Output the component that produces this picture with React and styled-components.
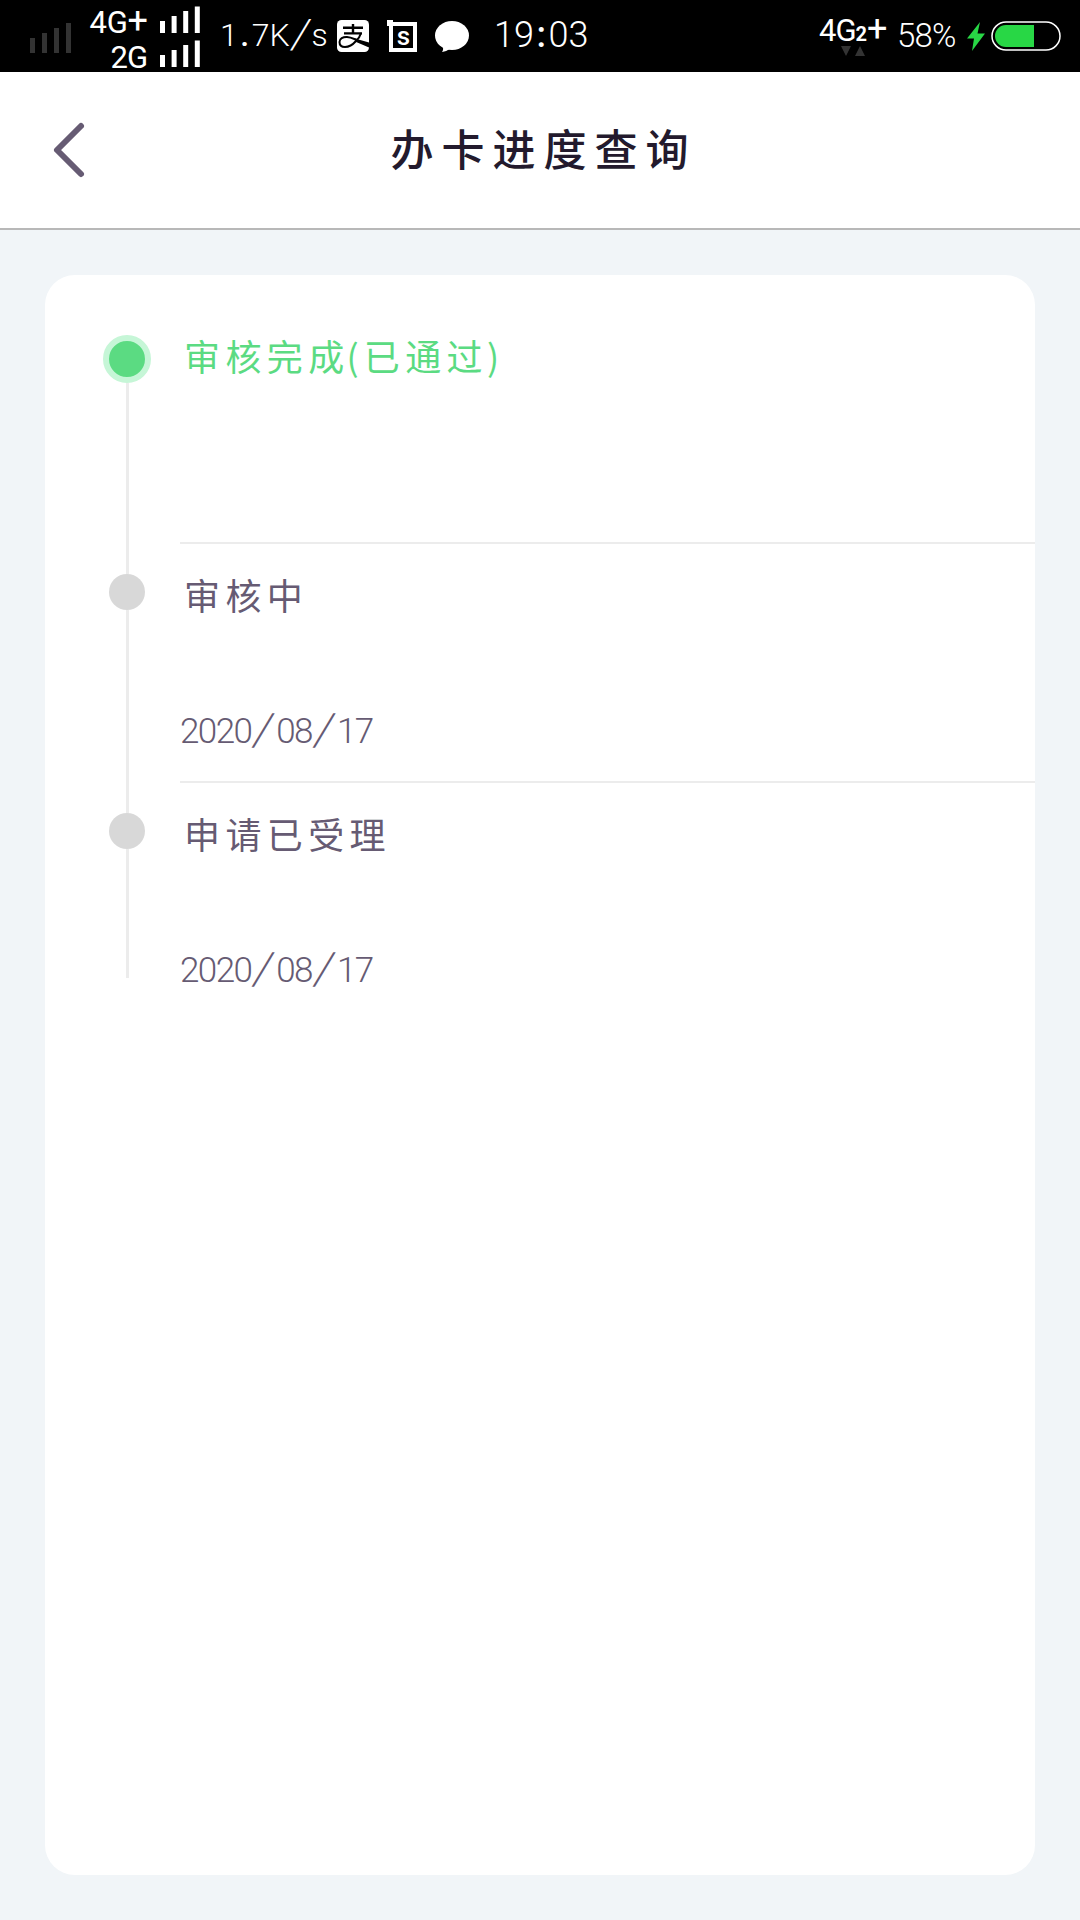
import React from 'react';
import styled, { createGlobalStyle } from 'styled-components';

const colors = {
  bg: '#f1f5f8',
  card: '#ffffff',
  heading: '#231a2d',
  text: '#665b73',
  done: '#5bdb82',
  halo: '#c6f6d7',
  dot: '#d8d8d8',
  line: '#ececec',
  battery: '#28d745',
  dim: '#333333',
};

const GlobalStyle = createGlobalStyle`
  * {
    box-sizing: border-box;
  }

  body {
    background: ${colors.bg};
    font-family: Roboto, 'Noto Sans CJK SC', sans-serif;
    margin: 0;
  }
`;

const Screen = styled.div`
  display: flex;
  flex-direction: column;
  height: 1920px;
  overflow: hidden;
  width: 1080px;
`;

const StatusBar = styled.div`
  background: #000;
  color: #fff;
  display: flex;
  height: 72px;
  justify-content: space-between;
  padding: 0 19px 0 30px;
`;

const Group = styled.div`
  align-items: flex-start;
  display: flex;
`;

const Icon = styled.svg`
  display: block;
  flex: none;
  margin-left: ${x => x.$left || 0}px;
  margin-top: ${x => x.$top || 0}px;
`;

const Networks = styled.div`
  display: flex;
  flex-direction: column;
  margin-left: 15px;
  padding-top: 5px;
  width: 115px;
`;

const Network = styled.div`
  align-items: flex-start;
  display: flex;
  height: 35px;
  justify-content: flex-end;
`;

const NetworkName = styled.span`
  font-size: 31px;
  font-weight: 400;
  height: 35px;
  letter-spacing: ${x => x.$tracking || -1}px;
  line-height: 36px;
  white-space: nowrap;
`;

const Plus = styled.span`
  font-size: 36px;
  letter-spacing: -1px;
  line-height: 0;
`;

const Reading = styled.span`
  flex: none;
  font-size: ${x => x.$size}px;
  font-weight: 300;
  letter-spacing: ${x => x.$tracking || 0}px;
  line-height: 40px;
  margin-left: ${x => x.$left}px;
  margin-top: ${x => x.$top}px;
  white-space: nowrap;
  width: ${x => x.$width}px;
`;

const Slash = styled.span`
  display: inline-block;
  font-size: 1.28em;
  letter-spacing: 0;
  line-height: 0.8;
  text-align: center;
  transform: skewX(-12deg);
  vertical-align: -2px;
  width: ${x => x.$width}px;
`;

const Mark = styled.span`
  font-weight: 500;
  padding: 0 ${x => x.$pad}px;
`;

const Mobile = styled.div`
  display: flex;
  flex-direction: column;
  padding-top: 13px;
  width: 78px;
`;

const Small = styled.span`
  font-size: 20px;
  font-weight: 700;
  letter-spacing: 0;
`;

const Header = styled.header`
  align-items: center;
  background: #fff;
  border-bottom: 2px solid #b8b8b8;
  display: grid;
  grid-template-columns: 120px 1fr 120px;
  height: 158px;
`;

const Back = styled.button`
  background: none;
  border: 0;
  height: 60px;
  padding: 0 0 0 51px;
`;

const Title = styled.h1`
  color: ${colors.heading};
  font-family: 'Noto Sans CJK SC', sans-serif;
  font-size: 43px;
  font-weight: 500;
  letter-spacing: 8px;
  line-height: 60px;
  margin: 0 0 7px;
  padding-left: 7px;
  text-align: center;
`;

const Card = styled.main`
  background: ${colors.card};
  border-radius: 30px;
  height: 1600px;
  margin: 45px;
  padding-top: 30px;
`;

const Step = styled.section`
  display: grid;
  grid-template-columns: 135px 1fr;
  height: 239px;
`;

const Rail = styled.div`
  align-items: center;
  display: flex;
  flex-direction: column;
  height: ${x => (x.$last ? 195 : 239)}px;
  padding-left: 29px;
`;

const Line = styled.div`
  background: ${x => (x.$hidden ? 'transparent' : colors.line)};
  flex: ${x => (x.$height ? `0 0 ${x.$height}px` : 1)};
  margin-left: 1px;
  width: 3px;
`;

const Dot = styled.div`
  background: ${x => (x.$active ? colors.done : colors.dot)};
  border: ${x => (x.$active ? `6px solid ${colors.halo}` : 0)};
  border-radius: 50%;
  flex: none;
  height: ${x => (x.$active ? 48 : 36)}px;
  width: ${x => (x.$active ? 48 : 36)}px;
`;

const Content = styled.div`
  border-bottom: ${x => (x.$last ? 0 : `2px solid ${colors.line}`)};
  color: ${x => (x.$active ? colors.done : colors.text)};
  padding-top: 25px;
`;

const Label = styled.div`
  font-family: 'Noto Sans CJK SC', sans-serif;
  font-size: 36px;
  font-weight: 400;
  height: 50px;
  letter-spacing: 5.4px;
  line-height: 50px;
  padding-left: 4px;
`;

const Paren = styled.span`
  letter-spacing: 2px;
  margin-left: ${x => (x.$open ? -3 : -1)}px;
  margin-right: ${x => (x.$open ? 3 : 0)}px;
`;

const DateText = styled.div`
  font-size: 35px;
  font-weight: 300;
  letter-spacing: -1.6px;
  line-height: 44px;
  margin-top: 91px;
`;

const steps = [
  {
    key: 'passed',
    label: (
      <>
        审核完成<Paren $open>(</Paren>已通过<Paren>)</Paren>
      </>
    ),
    active: true,
  },
  { key: 'review', label: '审核中', date: '2020/08/17' },
  { key: 'accepted', label: '申请已受理', date: '2020/08/17' },
];

const Bars = ({ heights, fill, pitch, ...rest }) => (
  <Icon width="41" height="30" fill={fill} {...rest}>
    {heights.map((h, i) => (
      <rect key={h} x={i * pitch} y={30 - h} width="5" height={h} />
    ))}
  </Icon>
);

const PayIcon = () => (
  <Icon $left={10} $top={20} width="32" height="32" viewBox="0 0 32 32">
    <rect width="32" height="32" rx="4.5" fill="#fff" />
    <g fill="none" stroke="#000" strokeWidth="2">
      <path d="M6 7.8H26M7 13.4H25M16 4V13.4" strokeWidth="2.4" />
      <path d="M24 13C23 16.5 21.5 19 19 21C15.5 25 12 27 8 27C4.5 27 2.5 25 2.5 22C2.5 18.5 6 16.8 10 17C14 17.2 17 19 21 20.5" />
    </g>
    <path d="M18 18.5L32 22.5V27.5L18 21.5Z" fill="#000" />
  </Icon>
);

const FrameIcon = () => (
  <Icon $left={18} $top={20} width="30" height="32" viewBox="0 0 30 32">
    <path d="M4 4H28V30H4Z" fill="none" stroke="#fff" strokeWidth="4" />
    <rect width="6" height="6" fill="#fff" />
    <text
      x="16.5"
      y="24.5"
      fill="#fff"
      fontFamily="Roboto"
      fontSize="26"
      fontWeight="500"
      textAnchor="middle"
    >
      s
    </text>
  </Icon>
);

const BubbleIcon = () => (
  <Icon $left={18} $top={20} width="34" height="32" viewBox="0 0 34 32">
    <ellipse cx="17" cy="15.5" rx="17" ry="14.5" fill="#fff" />
    <path d="M7 25C8.5 28 8.5 30 7 32C10 31.5 12.5 30.5 14.5 29Z" fill="#fff" />
  </Icon>
);

const Status = () => (
  <StatusBar>
    <Group>
      <Bars heights={[15, 20, 25, 30]} fill={colors.dim} pitch={12} $top={23} />
      <Networks>
        <Network>
          <NetworkName $tracking={-0.3}>
            4G<Plus>+</Plus>
          </NetworkName>
          <Bars heights={[12, 17, 22, 26.5]} fill="#fff" pitch={11.6} $left={13} $top={-2} />
        </Network>
        <Network>
          <NetworkName>2G</NetworkName>
          <Bars heights={[12, 17, 22, 26.5]} fill="#fff" pitch={11.6} $left={13} $top={-3} />
        </Network>
      </Networks>
      <Reading $size={32} $left={19} $top={15} $width={107}>
        1<Mark $pad={2.5}>.</Mark>7K<Slash $width={22}>/</Slash>s
      </Reading>
      <PayIcon />
      <FrameIcon />
      <BubbleIcon />
      <Reading $size={36} $left={25} $top={15} $width={94}>
        19<Mark $pad={2.5}>:</Mark>03
      </Reading>
    </Group>
    <Group>
      <Mobile>
        <NetworkName>
          4G<Small>2</Small>
          <Plus>+</Plus>
        </NetworkName>
        <Icon $left={22} $top={-2} width="26" height="10" fill={colors.dim}>
          <path d="M0 0H10L5 10ZM14 10H24L19 0Z" />
        </Icon>
      </Mobile>
      <Reading $size={33} $left={0} $top={16} $width={64} $tracking={-0.8}>
        58%
      </Reading>
      <Icon $left={6} $top={22} width="18" height="29" fill={colors.battery}>
        <path d="M13 0L0 16.5H7L5 29L18 11.5H10.5Z" />
      </Icon>
      <Icon $left={6} $top={21} width="70" height="30">
        <rect x="1" y="1" width="68" height="28" rx="14" fill="none" stroke="#fff" strokeWidth="1.5" />
        <path d="M43 4V26H15A11 11 0 0 1 15 4Z" fill={colors.battery} />
      </Icon>
    </Group>
  </StatusBar>
);

const formatDate = date =>
  date.split('/').map((part, i) => (
    <React.Fragment key={i}>
      {i > 0 && <Slash $width={25}>/</Slash>}
      {part}
    </React.Fragment>
  ));

const App = () => (
  <Screen>
    <GlobalStyle />
    <Status />
    <Header>
      <Back aria-label="返回">
        <Icon width="36" height="60" viewBox="0 0 36 60">
          <path
            d="M30 6L6 30L30 54"
            fill="none"
            stroke={colors.text}
            strokeWidth="6"
            strokeLinecap="round"
            strokeLinejoin="round"
          />
        </Icon>
      </Back>
      <Title>办卡进度查询</Title>
    </Header>
    <Card>
      {steps.map((step, i) => {
        const last = i === steps.length - 1;

        return (
          <Step key={step.key}>
            <Rail $last={last}>
              <Line $height={30} $hidden={i === 0} />
              <Dot $active={step.active} />
              <Line />
            </Rail>
            <Content $active={step.active} $last={last}>
              <Label>{step.label}</Label>
              {step.date && <DateText>{formatDate(step.date)}</DateText>}
            </Content>
          </Step>
        );
      })}
    </Card>
  </Screen>
);

export default App;
